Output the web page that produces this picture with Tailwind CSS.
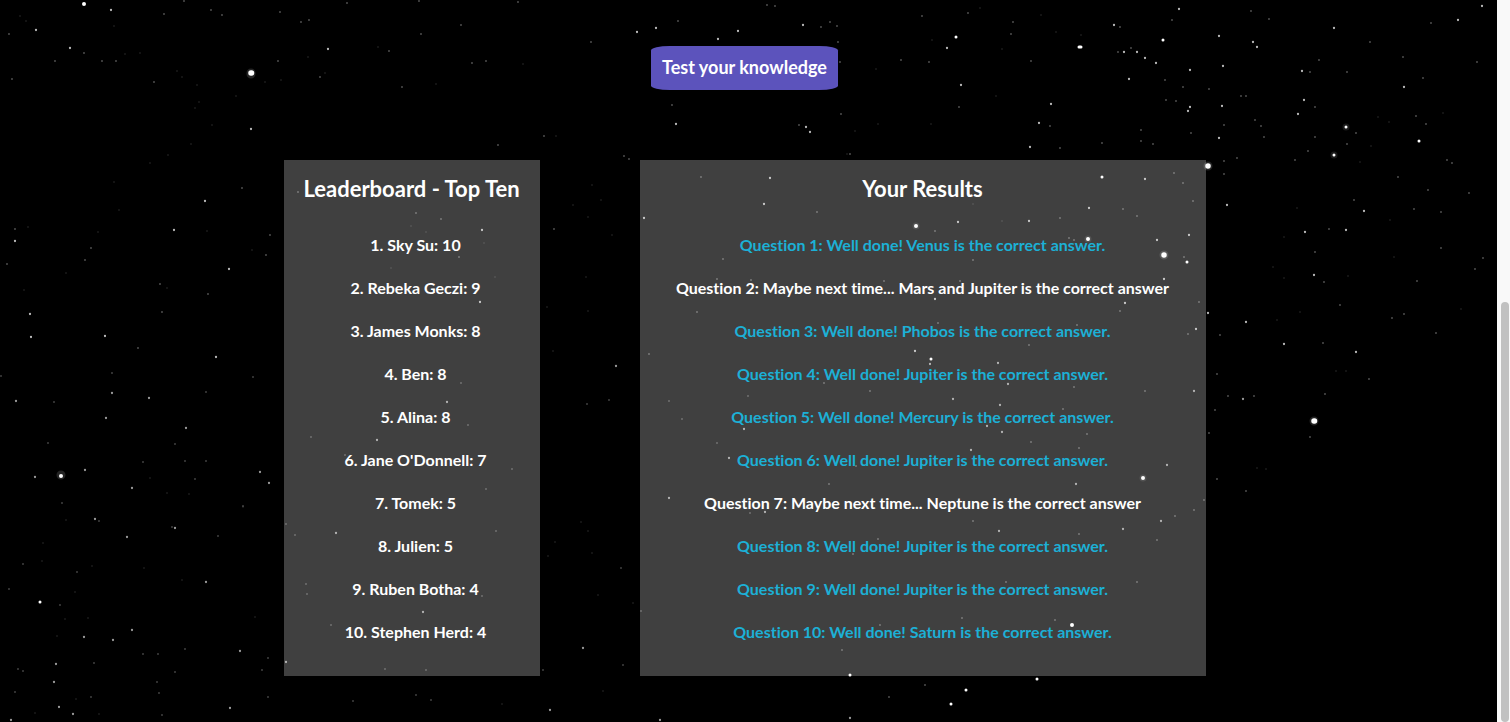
<!DOCTYPE html>
<html lang="en">
<head>
<meta charset="utf-8">
<meta name="viewport" content="width=device-width, initial-scale=1">
<title>Space Quiz</title>
<script src="https://cdn.jsdelivr.net/npm/@tailwindcss/browser@4"></script>
</head>
<body class="bg-black text-white font-['Gill_Sans','Lato',sans-serif] [font-variant-ligatures:none]">
<div class="flex min-h-screen">
  <div class="relative isolate min-w-0 grow overflow-hidden">
    <!-- Star field behind the content -->
    <svg class="absolute inset-0 -z-10 h-full w-full" fill="none" stroke="#fff" stroke-linecap="round" aria-hidden="true">
      <path stroke-width="9" opacity=".14" d="M251 73v1M1208 166h0M1314 421h0M1164 255h0M61 475h0"/>
      <path stroke-width="7" opacity=".1" d="M916 226h0M1088 239h0M1346 127h0M1334 155h0M1143 478h0"/>
      <path stroke-width="5.5" d="M251 73h.5M1208 166h0M1314 421h.5M1164 255h0"/>
      <path stroke-width="4" d="M84 4h0M916 226h0M1088 239h0M61 476h0M1072 625h0M1143 478h0"/>
      <path stroke-width="3" d="M931 359h0M1102 177h0M1346 127h0M1334 155h0M1187 262h0M966 690h0M951 704h0M1037 679h0M850 675h0M40 602h0M1419 141h0M1163 40h0M956 37h0M1079 47h2"/>
      <path stroke-width="2.3" opacity=".72" d="M111 10h0M36 30h0M70 48h0M328 49h0M251 129h0M205 201h0M174 230h0M229 269h0M15 241h0M30 314h0M31 337h0M105 336h0M216 357h0M637 32h0M656 28h0M718 39h0M738 31h0M676 124h0M482 230h0M480 302h0M644 218h0M803 25h0M947 48h0M961 85h0M1114 25h0M1129 79h0M806 127h0M810 132h0M770 178h0M764 204h0M958 222h0M1029 221h0M935 299h0M1125 303h0M915 351h0M1051 104h0M1039 123h0M1030 147h0M1124 52h0M1137 52h0M1089 208h0M1179 9h0M1145 58h0M1156 63h0M1190 70h0M1219 36h0M1223 66h0M1253 42h0M1257 47h0M1334 28h0M1482 6h0M1458 20h0M1302 71h0M1304 100h0M1298 114h0M1222 106h0M1190 107h0M1188 111h0M1219 138h0M1404 87h0M1145 179h0M1227 205h0M1364 211h0M1346 230h0M1305 232h0M1314 275h0M1189 235h0M1164 279h0M1157 240h0M1208 313h0M1246 322h0M1196 329h0M1284 344h0M1356 352h0"/>
      <path stroke-width="2.3" opacity=".6" d="M16 401h0M149 398h0M112 393h0M106 418h0M186 428h0M85 470h0M35 477h0M132 488h0M260 472h0M269 483h0M95 519h0M127 537h0M175 528h0M206 582h0M132 630h0M84 637h0M113 640h0M240 651h0M286 662h0M56 664h0M54 682h0M59 707h0M73 714h0M230 708h0M11 720h0M336 533h0M377 440h0M616 366h0M669 498h0M729 458h0M744 429h0M423 612h0M550 710h0M660 720h0M583 648h0M447 402h0M930 364h0M998 363h0M953 399h0M1002 432h0M987 426h0M971 450h0M765 512h0M1076 484h0M1123 529h0M850 718h0M1000 405h0M1008 384h0M999 531h0M1194 391h0M1167 465h0M1243 399h0M1161 521h0"/>
      <path stroke-width="2" opacity=".3" d="M211 10h0M9 34h0M12 79h0M55 61h0M154 82h0M102 61h0M116 61h0M84 53h0M242 188h0M266 255h0M85 260h0M160 284h0M162 312h0M7 264h0M15 229h0M91 248h0M138 348h0M208 294h0M270 235h0M309 20h0M301 22h0M347 3h0M280 12h0M222 15h0M164 14h0M184 1h0M278 61h0M320 77h0M298 192h0M461 25h0M421 34h0M591 42h0M472 63h0M486 61h0M402 87h0M389 51h0M498 145h0M544 136h0M624 156h0M629 159h0M672 105h0M441 219h0M416 213h0M701 177h0M459 257h0M723 259h0M717 279h0M751 280h0M697 312h0M649 354h0M554 229h0M678 21h0M518 2h0M419 1h0M767 5h0M775 6h0M821 27h0M830 22h0M837 26h0M838 42h0M840 62h0M841 114h0M799 125h0M922 16h0M968 13h0M929 62h0M959 107h0M901 60h0M1013 22h0M1011 34h0M1031 61h0M1118 52h0M1131 48h0M1120 27h0M1060 148h0M1102 143h0M850 154h0M1123 209h0M1060 218h0M884 281h0M960 281h0M935 231h0M817 212h0M1069 238h0M1074 240h0M973 260h0M938 323h0M1120 311h0M1137 216h0M1029 345h0M1077 325h0M1050 126h0"/>
      <path stroke-width="2" opacity=".3" d="M1172 20h0M1251 11h0M1269 19h0M1319 60h0M1310 72h0M1347 72h0M1370 42h0M1403 57h0M1423 78h0M1477 62h0M1431 23h0M1165 80h0M1166 100h0M1176 101h0M1183 87h0M1209 89h0M1241 96h0M1246 96h0M1255 120h0M1261 126h0M1264 137h0M1315 107h0M1315 137h0M1308 151h0M1295 160h0M1347 144h0M1356 133h0M1224 125h0M1224 161h0M1224 174h0M1237 158h0M1191 133h0M1141 130h0M1141 141h0M1153 144h0M1416 116h0M1426 124h0M1447 160h0M1452 163h0M1398 177h0M1428 190h0M1414 209h0M1441 212h0M1469 193h0M1354 200h0M1329 229h0M1315 252h0M1441 248h0M1417 281h0M1483 258h0M1475 269h0M1324 282h0M1340 305h0M1392 318h0M1404 314h0M1436 333h0M1323 343h0M1183 183h0M1174 173h0M1199 302h0M1188 334h0M1193 201h0M1220 335h0M1184 257h0M1145 391h0M1215 410h0M1228 396h0M1254 396h0M1209 433h0M1217 374h0M1325 394h0M1369 379h0M1310 437h0M1246 491h0M1204 500h0M1194 510h0M1175 516h0M1157 540h0M1217 479h0M824 383h0M870 391h0M1074 387h0M1063 409h0M1087 434h0M1031 442h0M1079 448h0M829 484h0M973 521h0M878 539h0M1079 534h0M853 554h0M1006 582h0M962 618h0M880 625h0M842 650h0M925 685h0M889 697h0M1055 620h0M856 466h0M1137 582h0"/>
      <path stroke-width="2" opacity=".25" d="M1 376h0M48 443h0M54 402h0M112 373h0M175 444h0M143 462h0M185 461h0M206 461h0M195 479h0M62 503h0M99 521h0M172 527h0M218 536h0M23 564h0M77 572h0M9 589h0M60 605h0M94 663h0M143 654h0M158 654h0M185 649h0M23 671h0M18 669h0M15 692h0M157 682h0M159 693h0M175 672h0M91 697h0M268 697h0M268 658h0M262 670h0M162 715h0M353 701h0M253 377h0M206 392h0M243 506h0M311 437h0M345 455h0M286 524h0M295 535h0M306 584h0M307 594h0M331 625h0M461 383h0M468 425h0M512 469h0M486 489h0M587 404h0M609 400h0M669 401h0M682 419h0M717 443h0M621 568h0M543 670h0M623 665h0M416 695h0M431 700h0M496 531h0M482 596h0M385 669h0M426 670h0M641 611h0M750 513h0M748 396h0"/>
      <path stroke-width="2" opacity=".1" d="M20 16h0M26 21h0M114 26h0M125 54h0M140 53h0M177 71h0M182 77h0M197 85h0M236 96h0M265 82h0M281 80h0M195 108h0M212 125h0M191 144h0M168 155h0M150 163h0M199 102h0M114 182h0M119 210h0M98 232h0M28 227h0M66 273h0M24 290h0M207 231h0M252 250h0M167 288h0M308 57h0M325 73h0M378 47h0M436 84h0M556 136h0M523 64h0M592 185h0M601 200h0M573 205h0M588 217h0M612 235h0M586 277h0M547 307h0M588 311h0M553 351h0M426 232h0M411 226h0M484 243h0M495 277h0M391 268h0M980 8h0M1041 15h0M1056 32h0M1081 35h0M1002 49h0M932 40h0M876 69h0M996 96h0M855 131h0M878 124h0M931 124h0M847 154h0M973 204h0M1002 221h0M1378 117h0M1389 122h0M1371 146h0M1360 162h0M1443 113h0M1297 208h0M1390 220h0M1284 237h0M1273 267h0M1394 257h0M1284 278h0M1348 276h0M1300 312h0M1277 320h0M1461 309h0M150 478h0M167 493h0M189 494h0M243 507h0M66 520h0M43 543h0M42 561h0M92 566h0M144 568h0M182 580h0M75 592h0M65 619h0M88 618h0M57 636h0M255 617h0M35 713h0M99 714h0M76 699h0M555 542h0M581 522h0M588 531h0M548 556h0M592 553h0M598 595h0M633 603h0M603 691h0M502 704h0M1257 468h0M1266 469h0M1336 371h0M1346 371h0"/>
    </svg>

    <main class="flex flex-col items-center gap-[70px] pt-[46px] pr-2 pb-[46px]">
      <button type="button" class="h-11 cursor-pointer rounded-[10%] bg-[#5c53bc] px-[11px] pb-px text-[18px] font-bold">Test your knowledge</button>

      <div class="flex flex-wrap justify-center gap-[100px]">
        <section class="w-64 bg-white/25 pt-[14px] pb-8 text-center" aria-labelledby="board">
          <h2 id="board" class="text-[22px] leading-[30px] font-bold whitespace-nowrap">Leaderboard - Top Ten</h2>
          <ol class="mt-[29px] flex flex-col gap-[19px] pl-2 text-[16px] leading-6 font-bold">
            <li>1. Sky Su: 10</li>
            <li>2. Rebeka Geczi: 9</li>
            <li>3. James Monks: 8</li>
            <li>4. Ben: 8</li>
            <li>5. Alina: 8</li>
            <li>6. Jane O'Donnell: 7</li>
            <li>7. Tomek: 5</li>
            <li>8. Julien: 5</li>
            <li>9. Ruben Botha: 4</li>
            <li>10. Stephen Herd: 4</li>
          </ol>
        </section>

        <section class="w-[566px] bg-white/25 pt-[14px] pb-8 text-center" aria-labelledby="results">
          <h2 id="results" class="text-[22px] leading-[30px] font-bold">Your Results</h2>
          <ul class="mt-[29px] flex flex-col gap-[19px] text-[16px] leading-6 font-bold text-[#1cb0d6]">
            <li>Question 1: Well done! Venus is the correct answer.</li>
            <li class="text-white">Question 2: Maybe next time... Mars and Jupiter is the correct answer</li>
            <li>Question 3: Well done! Phobos is the correct answer.</li>
            <li>Question 4: Well done! Jupiter is the correct answer.</li>
            <li>Question 5: Well done! Mercury is the correct answer.</li>
            <li>Question 6: Well done! Jupiter is the correct answer.</li>
            <li class="text-white">Question 7: Maybe next time... Neptune is the correct answer</li>
            <li>Question 8: Well done! Jupiter is the correct answer.</li>
            <li>Question 9: Well done! Jupiter is the correct answer.</li>
            <li>Question 10: Well done! Saturn is the correct answer.</li>
          </ul>
        </section>
      </div>
    </main>
  </div>

  <!-- Page scroll track and thumb -->
  <div class="flex w-[13px] shrink-0 flex-col bg-[#f9f9f9] pt-[302px] pr-px pl-1" aria-hidden="true">
    <div class="grow rounded-full bg-[#c1c1c1]"></div>
  </div>
</div>
</body>
</html>
